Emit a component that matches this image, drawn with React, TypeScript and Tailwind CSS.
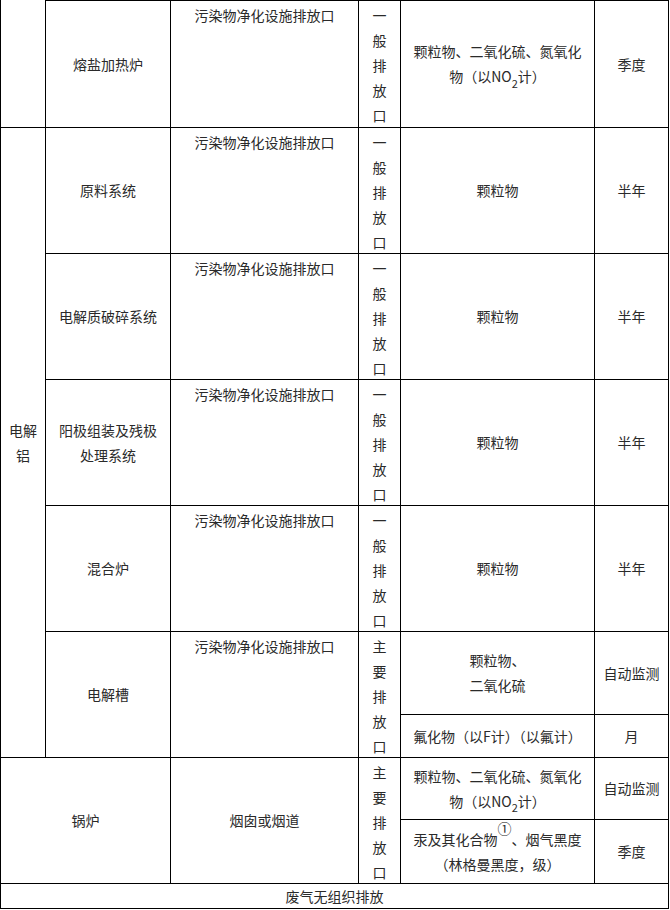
import React from "react";

const base = "border-r border-b border-black px-2 flex flex-col items-center text-center";
const mid = base + " justify-center";
const top = base + " justify-start pt-[2px]";

function Vert({ text }: { text: string }) {
  return (
    <>
      {text.split("").map((c, i) => (
        <span key={i} className="leading-[25px]">
          {c}
        </span>
      ))}
    </>
  );
}

function NO2() {
  return (
    <span>
      物（以NO<sub className="text-[11px] align-[-3px] leading-none">2</sub>计）
    </span>
  );
}

const rowStart = [
  "",
  "row-start-1",
  "row-start-2",
  "row-start-3",
  "row-start-4",
  "row-start-5",
  "row-start-6",
  "row-start-7",
  "row-start-8",
  "row-start-9",
  "row-start-10",
];

function Std({ r, name, first }: { r: number; name: string; first?: boolean }) {
  const t = first ? " border-t" : "";
  return (
    <>
      <div className={mid + t + " col-start-2 " + rowStart[r]}>{name}</div>
      <div className={top + t + " col-start-3 " + rowStart[r]}>污染物净化设施排放口</div>
      <div className={top + t + " px-0 col-start-4 " + rowStart[r]}>
        <Vert text="一般排放口" />
      </div>
    </>
  );
}

function Simple({ r }: { r: number }) {
  return (
    <>
      <Std r={r} name={names[r]} />
      <div className={mid + " col-start-5 " + rowStart[r]}>颗粒物</div>
      <div className={mid + " col-start-6 " + rowStart[r]}>半年</div>
    </>
  );
}

const names: Record<number, string> = {
  2: "原料系统",
  3: "电解质破碎系统",
  4: "阳极组装及残极处理系统",
  5: "混合炉",
};

export default function App() {
  return (
    <div className="bg-white w-[670px] h-[910px] text-[#2a2a2a] text-[14px] leading-[25px] font-['Noto_Sans_CJK_SC','Noto_Sans',sans-serif]">
      <div className="grid w-[669px] border-l border-black grid-cols-[45px_125px_188px_42px_194px_74px] grid-rows-[128px_126px_126px_126px_126px_83px_43px_62px_64px_25px]">
        {/* row 1 */}
        <div className="border-r border-b border-black col-start-1 row-start-1"></div>
        <Std r={1} name="熔盐加热炉" first />
        <div className={mid + " border-t col-start-5 row-start-1"}>
          <span>颗粒物、二氧化硫、氮氧化</span>
          <NO2 />
        </div>
        <div className={mid + " border-t col-start-6 row-start-1"}>季度</div>

        {/* 电解铝 */}
        <div className={mid + " px-[6px] col-start-1 row-start-2 row-span-6"}>电解铝</div>
        <Simple r={2} />
        <Simple r={3} />
        <Simple r={4} />
        <Simple r={5} />

        {/* 电解槽 */}
        <div className={mid + " col-start-2 row-start-6 row-span-2"}>电解槽</div>
        <div className={top + " col-start-3 row-start-6 row-span-2"}>污染物净化设施排放口</div>
        <div className={top + " px-0 col-start-4 row-start-6 row-span-2"}>
          <Vert text="主要排放口" />
        </div>
        <div className={mid + " col-start-5 row-start-6"}>
          <span>颗粒物、</span>
          <span>二氧化硫</span>
        </div>
        <div className={mid + " px-1 col-start-6 row-start-6"}>自动监测</div>
        <div className={mid + " px-1 col-start-5 row-start-7"}>氟化物（以F计）（以氟计）</div>
        <div className={mid + " col-start-6 row-start-7"}>月</div>

        {/* 锅炉 */}
        <div className={mid + " col-start-1 col-span-2 row-start-8 row-span-2"}>锅炉</div>
        <div className={mid + " col-start-3 row-start-8 row-span-2"}>烟囱或烟道</div>
        <div className={top + " px-0 col-start-4 row-start-8 row-span-2"}>
          <Vert text="主要排放口" />
        </div>
        <div className={mid + " col-start-5 row-start-8"}>
          <span>颗粒物、二氧化硫、氮氧化</span>
          <NO2 />
        </div>
        <div className={mid + " px-1 col-start-6 row-start-8"}>自动监测</div>
        <div className={mid + " col-start-5 row-start-9"}>
          <span>
            汞及其化合物
            <sup className="text-[14px] align-[4px] leading-none">①</sup>、烟气黑度
          </span>
          <span>（林格曼黑度，级）</span>
        </div>
        <div className={mid + " col-start-6 row-start-9"}>季度</div>

        {/* last */}
        <div className={mid + " col-start-1 col-span-6 row-start-10"}>废气无组织排放</div>
      </div>
    </div>
  );
}
